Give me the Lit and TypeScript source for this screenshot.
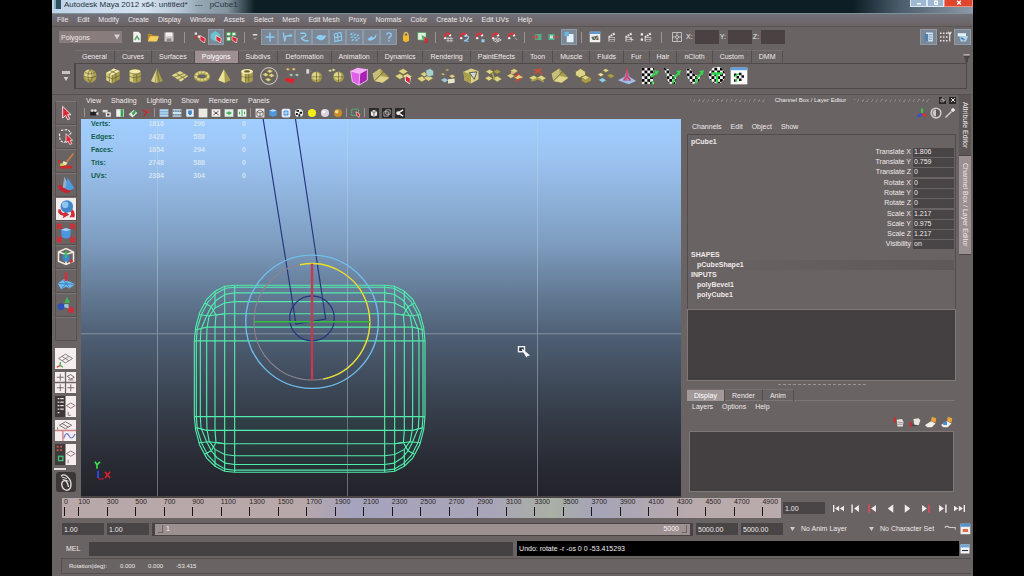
import { LitElement, html, svg, css } from "lit";

type Glyph = unknown;

const Y = "#ddd489";
const YD = "#a89e4e";
const YK = "#665f2c";

const plate = (x: number, y: number, s: number, c = Y) =>
  svg`<path d="M${x} ${y + s * 0.5}L${x + s} ${y}L${x + s * 2} ${y + s * 0.6}L${x + s} ${y + s * 1.2}Z" fill=${c} stroke=${YK} stroke-width=".6"/>`;

const checker = (id: string, outline: string) => {
  const cells = [];
  for (let r = 0; r < 6; r++) for (let c = 0; c < 6; c++) if ((r + c) % 2 === 0) cells.push(svg`<rect x=${2 + c * 3.4} y=${2 + r * 3.4} width="3.4" height="3.4" fill="#0a0a0a"/>`);
  return svg`<clipPath id=${id}><path d=${outline}/></clipPath><g clip-path="url(#${id})"><rect width="24" height="24" fill="#f4f4f4"/>${cells}</g>`;
};
const greenArrow = svg`<path d="M14 14L21 8M13 21L15 15" stroke="#35d64a" stroke-width="2.4" fill="none"/><path d="M17 6L23 5L21 11Z" fill="#35d64a"/>`;

/* Glyphs on a 24 unit grid, used by the shelf and the toolbox. */
const G: Record<string, Glyph> = {
  sphere: svg`<circle cx="12" cy="12" r="8" fill=${YD}/><circle cx="10.500" cy="10" r="5.500" fill=${Y}/><path d="M4 12Q12 16 20 12M12 4Q7 12 12 20M12 4Q17 12 12 20M6 8Q12 11 18 8" stroke=${YK} fill="none" stroke-width=".8"/>`,
  cube: svg`<path d="M4 8L13 3L20 6V16L11 21L4 17Z" fill=${YD}/><path d="M4 8L13 3L20 6L11 11Z" fill="#f2ebae"/><path d="M4 8L11 11V21L4 17Z" fill=${Y}/><path d="M7.500 9.500V19M4 12.500L11 15.500L20 11.500M15.500 9V18.500M8.500 5.500L15.500 9M16.500 4.500L7.500 9.500M11 11V21" stroke=${YK} fill="none" stroke-width=".8"/>`,
  cyl: svg`<path d="M5 7V18Q12 23 19 18V7Z" fill=${YD}/><path d="M6 8V18L11 20V8Z" fill=${Y}/><ellipse cx="12" cy="6.500" rx="7" ry="3" fill="#f2ebae" stroke=${YK} stroke-width=".8"/><path d="M5 12.500Q12 16 19 12.500M10 10V20M14 10V20" stroke=${YK} fill="none" stroke-width=".7"/>`,
  cone: svg`<path d="M12 3L19 18Q12 22 5 18Z" fill=${YD}/><path d="M12 3L12 20Q8 20 5 18Z" fill=${Y}/><path d="M12 4L10 20M12 4L15 20" stroke=${YK} stroke-width=".7"/>`,
  plane: svg`<path d="M2 11L12 6L22 12L13 19Z" fill=${Y}/><path d="M7.500 8.500L18 15.500M5 13.500L17 9M9 16.500L20 11" stroke=${YK} stroke-width=".9"/>`,
  torus: svg`<ellipse cx="12" cy="12.500" rx="7.500" ry="4.500" fill="none" stroke=${YD} stroke-width="4.500"/><ellipse cx="12" cy="12" rx="7.500" ry="4.500" fill="none" stroke=${Y} stroke-width="2.600" stroke-dasharray="3 1"/>`,
  pyramid: svg`<path d="M12 4L20 17L13 20L5 17Z" fill=${YD}/><path d="M12 4L13 20L5 17Z" fill="#ebe39a"/>`,
  pipe: svg`<path d="M5 7V18Q12 23 19 18V7Z" fill=${YD}/><path d="M6 8V18L10 20V8Z" fill=${Y}/><ellipse cx="12" cy="6.500" rx="7" ry="3" fill="#f2ebae"/><ellipse cx="12" cy="6.500" rx="3.500" ry="1.400" fill=${YK}/><path d="M5 12.500Q12 16 19 12.500M10 10V20M14 10V20" stroke=${YK} fill="none" stroke-width=".7"/>`,
  soccer: svg`<circle cx="12" cy="12" r="10" fill="none" stroke="#d8d0c4" stroke-width="1.200"/>${plate(9, 4, 4)}${plate(4, 8, 4)}${plate(11, 9, 4)}${plate(7, 14, 4)}`,
  combine: svg`${plate(4, 2, 3, "#e3c08c")}${plate(11, 2, 3, "#e3c08c")}${plate(8, 9, 3, "#a8d4dc")}${plate(15, 9, 3, "#a8d4dc")}<path d="M4 14L16 16L12 21L4 18Z" fill="#e0202c"/>`,
  sphereA: svg`<circle cx="15" cy="13" r="6.500" fill=${YD}/><circle cx="14" cy="12" r="4.500" fill=${Y}/><path d="M9 13H21M15 7V19" stroke=${YK} stroke-width=".8"/><path d="M3 4H6V9H3ZM7 6H9" fill="#ddd" stroke="#bbb" stroke-width=".5"/>`,
  sphereB: svg`<circle cx="15" cy="13" r="6.500" fill=${YD}/><circle cx="14" cy="12" r="4.500" fill=${Y}/><path d="M9 13H21M15 7V19" stroke=${YK} stroke-width=".8"/>${plate(2, 4, 3, "#d8d4b0")}${plate(6, 3, 3, "#d8d4b0")}`,
  magenta: svg`<path d="M2 6L10 2L22 4V17L12 23L4 19Z" fill="#a822b4"/><path d="M2 6L10 2L22 4L13 9Z" fill="#f3b0f6"/><path d="M2 6L13 9L12 23L4 19Z" fill="#df5fe8"/><path d="M2 6L13 9L22 4M13 9L12 23M2 6L4 19L12 23L22 17V4" stroke="#f7d3fa" fill="none"/>`,
  wedge: svg`<path d="M2 9L11 3L22 14L14 20L4 18Z" fill=${YD}/><path d="M2 9L11 3L12 12L4 18Z" fill="#c6be7a"/><path d="M4 18L12 12L22 14L14 20Z" fill=${Y}/><path d="M4 18L16 6" stroke=${YK}/>`,
  extrude: svg`${plate(5, 3, 6)}${plate(1, 9, 6)}${plate(10, 9, 6)}<path d="M13 11L20 14L19 22L13 18Z" fill="#fff"/><path d="M14 12L19 15V21L14 17Z" fill="#d8202c"/>`,
  bridge: svg`${plate(1, 12, 6)}${plate(9, 11, 6)}${plate(5, 7, 5)}<path d="M12 5L17 3L21 6V11L16 13L12 11Z" fill="#a9d0c6" stroke="#5e7a86" stroke-width=".8"/>`,
  append: svg`${plate(8, 3, 3, "#a8a27c")}${plate(3, 8, 3, "#bcb68a")}${plate(3, 14, 5, "#9cc9ea")}${plate(13, 10, 4)}<path d="M12 16L20 15V20L12 21Z" fill="#e9e6c8"/>`,
  cubeFace: svg`<path d="M3 7L12 3L21 6V16L12 21L4 17Z" fill=${Y}/><path d="M3 7L12 10V21L4 17Z" fill=${YD}/><path d="M10 8L19 7L16 16Z" fill="#d4d8d2" stroke="#333" stroke-width=".9"/>`,
  planes: svg`${plate(3, 4, 5)}${plate(12, 4, 5, YD)}${plate(2, 12, 5)}${plate(11, 12, 6)}<path d="M11 8L14 16" stroke=${YD} stroke-width="2"/>`,
  planesRed: svg`${plate(6, 3, 5)}${plate(2, 9, 5)}${plate(10, 10, 6)}<path d="M12 13L17 9M13 18L19 15" stroke="#d84030" stroke-width="2"/><circle cx="9" cy="8" r="2" fill="#e3b070"/>`,
  planesTop: svg`${plate(1, 11, 6)}${plate(10, 11, 6)}<path d="M7 5H16M8 9L16 3M10 4L17 10" stroke="#c2523c" stroke-width="2"/><path d="M4 18L12 15L19 19" stroke=${YD} stroke-width="2" fill="none"/>`,
  boxes: svg`<path d="M3 7L9 3L15 7V12L8 14L3 11Z" fill=${Y} stroke=${YK} stroke-width=".7"/><path d="M10 13L16 11L22 14V18L15 21L10 18Z" fill=${YD} stroke=${YK} stroke-width=".7"/>${plate(10, 11, 5)}`,
  swap: svg`${plate(9, 3, 4)}${plate(3, 8, 4, "#e9e2a4")}${plate(14, 9, 5, YD)}${plate(4, 14, 5, "#8ccdf2")}`,
  sculpt: svg`<path d="M1 17L9 13H15L23 18L14 22Z" fill="#9ebfe8"/><path d="M12 4L17 18H7Z" fill="#a97db8"/><path d="M12 3V14M8 17L12 13L16 17" stroke="#e23a4c" stroke-width="1.500" fill="none"/>`,
  uvA: svg`${checker("ka", "M2 2H17L15 12L17 22H2Z")}<path d="M13 13L20 8M15 18V22" stroke="#35d64a" stroke-width="2.400"/><path d="M17 5L23 6L20 11Z" fill="#35d64a"/>`,
  uvB: svg`${checker("kb", "M2 2L8 4L10 10L17 12L16 22L8 21Z")}${greenArrow}`,
  uvC: svg`${checker("kc", "M2 3L7 3Q8 10 18 13L17 19L9 22Q1 16 2 3Z")}${greenArrow}`,
  uvD: svg`${checker("kd", "M12 1A10 10 0 1 1 11.900 1Z")}<path d="M6 9H18M12 9V20" stroke="#35d64a" stroke-width="2.800"/>`,
  uvE: svg`<rect x="2" y="2" width="20" height="20" fill="#fbfbfb"/><rect x="2" y="2" width="20" height="3" fill="#5aa0e0"/><path d="M6 9H9V12H6ZM12 8H15V11H12ZM9 12H12V15H9ZM15 11H18V14H15ZM12 15H15V18H12ZM6 16H8V19H6Z" fill="#111"/><path d="M6 13L12 9M9 19V15" stroke="#35d64a" stroke-width="1.600"/>`,
  arrow: svg`<path d="M8 4V18L11.500 15L14 20L16.500 19L14 14H18Z" fill="#d92a36" stroke="#fff" stroke-width="1"/>`,
  lasso: svg`<path d="M6 4L14 3L18 7L15 11M4 8L5 16L9 19L12 17" stroke="#e8e4e4" fill="none" stroke-width="1.400" stroke-dasharray="3 1.500"/><path d="M12 8V19L14.500 17L16.500 21L19 20L17 16H20Z" fill="#d92a36" stroke="#fff" stroke-width=".8"/>`,
  paint: svg`<path d="M13 13L21 3" stroke="#c97f4a" stroke-width="2"/><path d="M9 12L14 14L11 18L7 17Z" fill="#eee3b2"/><path d="M2 10L6 12L3 15M3 20L9 17L20 18L19 21H5Z" fill="#cc2b2b"/><path d="M5 15H9V18H5Z" fill="#d9c84e"/>`,
  move: svg`<path d="M10 2L16 14Q13 18 8 15Z" fill="#9fc3e4" opacity=".8"/><path d="M14 3L22 16Q16 20 11 17Z" fill="#4f9be0"/><path d="M2 13L7 12L8 15L19 20L12 22L4 18Z" fill="#c42733"/>`,
  rotate: svg`<rect width="24" height="24" fill="#f3ecec"/><path d="M3 12Q1 19 9 20L8 23L16 19L10 14V17Q6 17 6 13ZM18 11Q24 15 22 22H16Q20 17 17 15Z" fill="#d02d38"/><circle cx="13" cy="9" r="7.500" fill="#3f86cc"/><circle cx="11" cy="7" r="4" fill="#8fc4ee"/>`,
  scale: svg`<path d="M1 1H8L6 4L9 8L7 9L4 6L1 8ZM23 1H16L18 4L15 8L17 9L20 6L23 8ZM1 23H8L6 20L9 16L7 15L4 18L1 16ZM23 23H16L18 20L15 16L17 15L20 18L23 16Z" fill="#d02d38"/><path d="M6 8L12 6L18 8L17 17L12 19L7 17Z" fill="#4a96e0"/><path d="M6 8L12 6L18 8L12 10Z" fill="#a5d0f4"/>`,
  univ: svg`<path d="M3 6L12 2L21 6V17L12 21L3 17ZM3 6L12 9L21 6M12 9V21" fill="none" stroke="#f1eee0" stroke-width="1.800"/><circle cx="12" cy="13" r="4.500" fill="#3a86cf"/><path d="M12 5V13" stroke="#38c24a" stroke-width="2.500"/><path d="M17 14L21 17L17 20Z" fill="#d92a36"/>`,
  soft: svg`<path d="M2 15L9 10L15 12L23 16L16 21L12 19L6 22Z" fill="#6fb9ee"/><path d="M3 15L22 16M9 11L16 20M15 12L7 21" stroke="#2d6da8" stroke-width=".8"/><path d="M12 2V12" stroke="#d8303a" stroke-width="3"/>`,
  manip: svg`<circle cx="6" cy="14" r="4" fill="#2f50b8"/><path d="M11 13L18 18" stroke="#ddd" /><path d="M10 10L13 2L17 9Z" fill="#3cb84a"/><circle cx="18" cy="18" r="3.500" fill="#d32c38"/><rect x="10" y="11" width="5" height="4" fill="#9bc8e8"/>`,
  none: svg``,
  persp: svg`<rect width="24" height="24" fill="#f6eeee"/><path d="M4 12L12 7L20 12L12 17ZM8 9.500L16 14.500M8 14.500L16 9.500" stroke="#7c7474" fill="none"/><path d="M6 16V20L9 22" stroke="#34b24a" fill="none" stroke-width="1.500"/><path d="M6 20L2 22" stroke="#d33" stroke-width="1.500"/>`,
  four: svg`<rect width="24" height="24" fill="#f6eeee"/><path d="M12 0V24M0 12H24" stroke="#6b6464" stroke-width="1.500"/><path d="M2 6H10M6 2V10M2 18H10M6 14V22M14 18H22M18 14V22M14 5L18 3L22 6L18 8ZM15 9H21" stroke="#6b5c5c" fill="none"/>`,
  outl: svg`<rect width="24" height="24" fill="#f6eeee"/><rect width="12" height="24" fill="#3d3939"/><path d="M3 3H5M3 7H5M3 11H5M3 15H5M3 19H5M6 3H10M6 7H10M6 11H10M6 15H10" stroke="#e8e0e0" stroke-width="1.200"/><path d="M13 11L18 8L23 11L18 14ZM15 18V22H18" stroke="#8a6c6c" fill="none"/>`,
  graph: svg`<rect width="24" height="24" fill="#f6eeee"/><path d="M0 12H24M9 12V24" stroke="#d08080" stroke-width="1.500"/><path d="M5 6L12 2L19 6L12 10ZM8 4L15 8" stroke="#6b6464" fill="none"/><path d="M10 21Q13 12 16 18T23 16" stroke="#6678c8" fill="none" stroke-width="1.300"/><path d="M3 8V11" stroke="#3a3"/>`,
  hyper: svg`<rect width="24" height="24" fill="#f6eeee"/><rect width="12" height="24" fill="#3d3939"/><path d="M2 3H4M6 3H8M2 7H4M6 7H8" stroke="#e25a4a" stroke-width="2"/><rect x="4" y="14" width="5" height="5" fill="none" stroke="#49c07a" stroke-width="1.500"/><path d="M13 11L18 8L23 11L18 14ZM15 18V22" stroke="#8a6c6c" fill="none"/>`,
  last: svg`<rect width="24" height="24" rx="4" fill="#3b3737"/><path d="M6 5Q9 2 13 5Q18 9 18 15Q18 21 13 22Q8 21 7 16Q6 11 11 10Q14 12 15 18" stroke="#e6dfdf" fill="none" stroke-width="1.600"/><path d="M7 6L13 8M8 9L15 11" stroke="#e6dfdf" stroke-width="1.200"/>`,
};

const magnet = svg`<path d="M3 10A5 5 0 1 1 12 5L9 7A2.200 2.200 0 1 0 5.500 8.500Z" fill="#e0303a"/><path d="M2.500 8.500L5.500 8L6 10.500L3 11ZM9 5.500L11.500 4L12.500 6.500L10 7.500Z" fill="#f2eeee"/>`;
const clap = svg`<path d="M3 8H12V14H3Z" fill="#b9b3b3"/><path d="M3 7L11 2L12 5L4 9Z" fill="#e9e4e4"/><path d="M5 10H11M5 12.500H11M5 5.500L7 8M8 4L10 7" stroke="#444"/>`;
const blue = "#8cccf2";

/* Glyphs on a 16 unit grid, used by the status line and small bars. */
const S: Record<string, Glyph> = {
  newf: svg`<path d="M3 1H10L13 4V15H3Z" fill="#f4f2ee"/><path d="M5 12L8 7L11 12" stroke="#5fae72" stroke-width="2" fill="none"/>`,
  open: svg`<path d="M1 4H6L8 6H14V13H1Z" fill="#b9892a"/><path d="M4 7H16L13 14H1Z" fill="#f2cf5e"/>`,
  save: svg`<path d="M2 2H14V14H2Z" fill="#cdc6c6"/><path d="M4 2H12V7H4Z" fill="#f3efef"/><path d="M5 10H11V14H5Z" fill="#8b8484"/>`,
  selH: svg`<path d="M1 2H4V5H1ZM5 6H8V9H5Z" fill="#e8e4e4"/><path d="M1 7H4V10H1Z" fill="#c33"/><path d="M8 6L15 10L14 16L8 12Z" fill="#d92a36" stroke="#fff" stroke-width=".8"/>`,
  selO: svg`<path d="M1 4L7 0L13 4V11L7 14L1 10Z" fill="#6ac4cf"/><path d="M8 6L15 10L14 16L8 12Z" fill="#d92a36" stroke="#fff" stroke-width=".8"/>`,
  selC: svg`<path d="M1 2H6V6H1ZM8 2H13V6H8ZM1 8H6V13H1Z" fill="#eef4ea" stroke="#3fae57"/><path d="M8 7L15 10L14 16L8 12Z" fill="#d92a36" stroke="#fff" stroke-width=".8"/>`,
  tiny: svg`<path d="M5 4H11V6H5Z" fill="#ddd"/><path d="M5 9H11L8 12Z" fill="#9c9494"/>`,
  plus: svg`<path d="M8 2V14M2 8H14" stroke=${blue} stroke-width="2"/>`,
  joint: svg`<path d="M3 2L5 14L6 7L13 6" stroke=${blue} stroke-width="1.800" fill="none"/><circle cx="13" cy="6" r="1.800" fill=${blue}/>`,
  curve: svg`<path d="M3 3H9Q13 6 7 8T10 13H14" stroke=${blue} stroke-width="1.800" fill="none"/>`,
  surf: svg`<path d="M1 9Q5 3 10 6L15 6Q12 14 6 12Z" fill=${blue}/>`,
  deform: svg`<path d="M3 4L12 2L13 12L4 14ZM7 3L8 13M3 9L13 7" stroke=${blue} stroke-width="1.400" fill="none"/>`,
  dyn: svg`<path d="M2 5L6 2M3 9L10 3M4 13L13 5M9 13L14 9" stroke=${blue} stroke-width="2" stroke-dasharray="3 1.500"/>`,
  rend: svg`<path d="M2 11L7 7L10 9L14 4L13 9L9 12L4 13Z" fill=${blue}/>`,
  misc: svg`<path d="M5 5Q5 2.500 8 2.500T11 5.500Q11 7.500 8 8.500V10.500M8 12V14" stroke=${blue} stroke-width="1.900" fill="none"/>`,
  lock: svg`<path d="M5.500 7V4Q8 0 10.500 4V7" stroke="#e4c25a" stroke-width="1.800" fill="none"/><path d="M4 6H12V13L8 15L4 13Z" fill="#efb92c"/>`,
  hilite: svg`<rect x="1" y="2" width="11" height="10" fill="#e6f0e4" stroke="#4aa35c"/><path d="M6 5L13 9L12 14L7 11Z" fill="#4fb36a"/><path d="M10 8L14 10V16H10Z" fill="#d92a36"/>`,
  magG: svg`${magnet}<path d="M6 10H15M6 13H15M8 8V15M12 8V15" stroke="#d8d2d2"/>`,
  magC: svg`${magnet}<path d="M8 7Q15 6 14 9T8 13L14 14" stroke="#8fc6ea" fill="none" stroke-width="1.600"/>`,
  magP: svg`${magnet}<rect x="10" y="11" width="4" height="4" fill="#8fd0f0"/>`,
  magV: svg`${magnet}<path d="M4 12L10 9L15 12L9 15ZM7 10.500L12 13.500M7 14L13 10" stroke="#e4dede" fill="none"/>`,
  magL: svg`${magnet}<path d="M12 9L15 12" stroke="#ccc"/>`,
  inp: svg`<path d="M5 4H14V12H5Z" fill="#4fb08c"/><path d="M1 8H9M6 5L9 8L6 11" stroke="#d8404a" fill="none" stroke-width="1.500"/>`,
  outp: svg`<path d="M2 4H10V12H2Z" fill="#4fb08c"/><path d="M8 8H15" stroke="#d8404a" stroke-width="1.500"/><path d="M4 6H8V10H4Z" fill="#bfe6d8"/>`,
  hist: svg`<path d="M5 4H14V15H5Z" fill="#e6f2fa"/><path d="M2 1H8V7H2Z" fill="#6cb6e4"/>`,
  rview: svg`<rect x="1" y="1" width="14" height="14" fill="#f0f0f0"/><rect x="1" y="1" width="14" height="3" fill="#5d9ad0"/><path d="M3 8L12 6L13 12H5Z" fill="#5a6a78"/><path d="M6 7L9 12L12 7" stroke="#e3c05a" fill="none"/>`,
  clap, clap2: svg`${clap}<path d="M9 10L14 12" stroke="#fff"/>`,
  rset: svg`<path d="M1 3H4V6H1ZM1 10H4V13H1Z" fill="#eee"/><g transform="translate(3 0)">${clap}</g>`,
  xyz: svg`<path d="M2 2H14V14H2ZM8 2V14M2 8H14" stroke="#ddd6d6" fill="none"/><circle cx="8" cy="8" r="2" fill="#6b6464" stroke="#ddd6d6"/>`,
  attr: svg`<rect x="4" y="2" width="9" height="12" fill="#d6e8f6"/><rect x="2" y="4" width="5" height="10" fill="#5580a8"/><path d="M8 5H12M8 8H12M8 11H12" stroke="#5580a8"/>`,
  tool: svg`<path d="M0 3H2M4 3H6M8 3H10M0 8H2M4 8H6M8 8H10M0 13H2M4 13H6M8 13H10" stroke="#eee6e6" stroke-width="1.800"/><path d="M13 2V14M11 1L13 5L15 1" stroke="#eee6e6" fill="none" stroke-width="1.500"/>`,
  chan: svg`<path d="M1 3H12V7H1Z" fill="#e9f3fa"/><path d="M3 6L15 7L12 14H5Z" fill="#b4d2e6"/><path d="M5 9L10 12" stroke="#4b86b8" stroke-width="2"/>`,
  cam: svg`<path d="M2 6H11V12H2Z" fill="#222"/><circle cx="5" cy="4" r="2.200" fill="#ddd"/><circle cx="10" cy="4" r="2.200" fill="#ddd"/><path d="M11 9L15 6V12Z" fill="#ddd"/>`,
  cam2: svg`<path d="M1 3H9V7H1Z" fill="#ddd"/><path d="M6 7H14V14H6Z" fill="#f3efef"/><path d="M8 9H12V12H8Z" fill="#444"/>`,
  book: svg`<rect x="2" y="2" width="12" height="12" fill="#f2f6f2"/><rect x="9" y="2" width="4" height="12" fill="#2fa84c"/>`,
  imgp: svg`<path d="M1 10L9 3L15 8L7 15Z" fill="#dfe8dc"/><path d="M6 8L12 2V8L8 12Z" fill="#3fa35a"/>`,
  zoomp: svg`<circle cx="12" cy="5" r="2.500" fill="none" stroke="#d33" stroke-width="1.500"/><path d="M2 3L9 7L4 14" stroke="#c22" stroke-width="1.800" fill="none"/>`,
  gridi: svg`<rect x="1" y="2" width="14" height="12" fill="#b8d8f2"/><path d="M1 6H15M1 10H15" stroke="#4b86b8"/>`,
  film: svg`<rect x="1" y="2" width="14" height="12" fill="#cfe2f0"/><path d="M1 5H15M1 11H15" stroke="#35546e" stroke-width="2" stroke-dasharray="2 1"/>`,
  resg: svg`<rect x="2" y="2" width="12" height="12" fill="#dff0fc"/><path d="M5 4H11V9L8 12L5 9Z" fill="#3f86c4"/>`,
  gate: svg`<rect x="1" y="1" width="14" height="14" fill="#ebe9e4"/>`,
  fldc: svg`<rect x="1" y="2" width="14" height="12" fill="#f3efec"/><path d="M4 5L12 11M12 5L4 11" stroke="#333" stroke-width="1.300"/>`,
  safe: svg`<rect x="1" y="2" width="14" height="12" fill="#dff3e4"/><path d="M3 8L8 5L13 8L8 11Z" fill="#4ab06a"/>`,
  safe2: svg`<rect x="1" y="2" width="14" height="12" fill="#e6f3e8"/><path d="M8 3V13M4 6V10M12 6V10" stroke="#3c9c58" stroke-width="1.500"/>`,
  wire: svg`<rect x="1" y="1" width="14" height="14" fill="#eee8e6"/><path d="M3 6L8 3L13 6V12L8 14L3 12ZM3 6L8 8L13 6M8 8V14" stroke="#333" fill="none"/>`,
  shade: svg`<path d="M2 4L8 2L14 4V12L8 14L2 12Z" fill="#4f98e0"/><path d="M2 4L8 2L14 4L8 6Z" fill="#b8dcf8"/>`,
  shadew: svg`<rect x="1" y="1" width="14" height="14" rx="3" fill="#dcecfa"/><path d="M4 5L8 3L12 5V11L8 13L4 11Z" fill="#4f98e0"/><path d="M8 3V13M4 8H12" stroke="#fff"/>`,
  tex: svg`<circle cx="8" cy="8" r="6.500" fill="#f3f3f3"/><path d="M4 3H8V6H4ZM9 6H13V9H9ZM3 8H6V11H3ZM7 10H10V14H7Z" fill="#111"/>`,
  lightY: svg`<circle cx="8" cy="8" r="6.500" fill="#f2ee18"/>`,
  lightW: svg`<circle cx="8" cy="8" r="6.500" fill="#dcd2e0"/><circle cx="6" cy="6" r="2.500" fill="#fff"/>`,
  lightO: svg`<circle cx="8" cy="8" r="6.500" fill="#c98d28"/><circle cx="6" cy="6" r="2.800" fill="#f8dc8c"/>`,
  iso: svg`<rect x="1" y="2" width="11" height="10" fill="none" stroke="#4fc06a" stroke-dasharray="2 1" stroke-width="1.800"/><path d="M8 6L14 10L13 15L9 12Z" fill="#d92a36" stroke="#fff" stroke-width=".8"/>`,
  xray: svg`<rect width="16" height="16" fill="#2c2929"/><path d="M3 5L8 3L13 5V12L8 14L3 12Z" fill="#e9e5e5"/><path d="M3 5L8 7L13 5M8 7V14" stroke="#333" fill="none"/>`,
  xrayb: svg`<rect width="16" height="16" fill="#2c2929"/><path d="M3 6H10V13H3ZM6 3H13V10H6Z" stroke="#e9e5e5" fill="none"/>`,
  share: svg`<rect width="16" height="16" fill="#2c2929"/><path d="M13 3L5 8L13 13" stroke="#f2eeee" stroke-width="2.500" fill="none"/><circle cx="5" cy="8" r="3" fill="#f2eeee"/>`,
  axes: svg`<path d="M8 9V2" stroke="#3fc050" stroke-width="3"/><path d="M8 9L2 13" stroke="#2f4fd8" stroke-width="3"/><path d="M8 9L14 12" stroke="#d83030" stroke-width="3"/>`,
  half: svg`<circle cx="8" cy="8" r="7.500" fill="#d0c8c8"/><path d="M8 3A5 5 0 0 1 8 13Z" fill="#5c5555"/><circle cx="8" cy="8" r="5" fill="none" stroke="#6b6464"/>`,
  pick: svg`<path d="M2 14L10 6" stroke="#d6cfcf" stroke-width="2"/><path d="M9 4L12 1L15 4L12 7Z" fill="#f0eaea"/>`,
  layU: svg`<path d="M1 2H4V9H1Z" fill="#c82f34"/><path d="M5 5L12 4L14 8L13 14H6Z" fill="#e9e4dc"/><path d="M6 8L13 9M6 11H13" stroke="#827a7a"/>`,
  layD: svg`<path d="M1 8H4V15H1Z" fill="#c82f34"/><path d="M6 4L13 3L15 6L13 12H7Z" fill="#e9e4dc"/><path d="M4 12L10 13" stroke="#444" stroke-width="2"/>`,
  layN: svg`<path d="M0 12L8 7L14 10L9 15H3Z" fill="#f3f0ea"/><path d="M9 1L15 3L14 9L8 7Z" fill="#e8a33a"/>`,
  layS: svg`<path d="M0 12L8 7L14 10L9 15H3Z" fill="#f3f0ea"/><path d="M3 8H8V12H3Z" fill="#3f8fe0"/><path d="M9 1L15 3L14 9L8 7Z" fill="#e8a33a"/>`,
  key: svg`<path d="M1 6Q4 3 7 6H15V9" stroke="#cfc7c7" fill="none" stroke-width="1.500"/>`,
  pref: svg`<rect x="2" y="1" width="13" height="14" fill="#f3eeee"/><rect x="2" y="1" width="13" height="4" fill="#4f93d0"/><path d="M5 8H12V12H5Z" fill="#df6a4a"/>`,
  script: svg`<rect x="2" y="2" width="12" height="12" fill="#f0f4f8"/><rect x="2" y="2" width="12" height="4" fill="#6ea6d4"/><path d="M4 10H12" stroke="#333" stroke-width="1.500"/>`,
  trash: svg`<path d="M5 4H14V7L11 9V15H7V9L5 7Z" fill="#4a4444"/><path d="M4 3H14" stroke="#c9c2c2" stroke-width="2"/>`,
  wmin: svg`<path d="M3 8H13V12H3Z" fill="#fff"/>`,
  wmax: svg`<path d="M3 1H13V13H3ZM6 5V9H10V5Z" fill="#fff" fill-rule="evenodd"/>`,
  wx: svg`<path d="M3 2L13 12M13 2L3 12" stroke="#fff" stroke-width="3.500"/>`,
  pfl: svg`<path d="M6 2H14V9H6ZM2 6H10V13H2Z" fill="#2a2627" stroke="#e8e0e0" stroke-width="1.400"/>`,
  px: svg`<path d="M3 3L13 13M13 3L3 13" stroke="#f2ecec" stroke-width="2.600"/>`,
  p0: svg`<path d="M1 3V13" stroke="#f2ecec" stroke-width="2"/><path d="M9 4V12L3 8ZM16 4V12L10 8Z" fill="#f2ecec"/>`,
  p1: svg`<path d="M3 2V14" stroke="#f2ecec" stroke-width="2"/><path d="M13 3V13L6 8Z" fill="#f2ecec"/>`,
  p2: svg`<path d="M3 2V14" stroke="#f0465a" stroke-width="2"/><path d="M13 3V13L6 8Z" fill="#f2ecec"/>`,
  p3: svg`<path d="M12 2V14L4 8Z" fill="#f2ecec"/>`,
  p4: svg`<path d="M4 2V14L12 8Z" fill="#f2ecec"/>`,
  p5: svg`<path d="M13 2V14" stroke="#f0465a" stroke-width="2"/><path d="M3 3V13L10 8Z" fill="#f2ecec"/>`,
  p6: svg`<path d="M13 2V14" stroke="#f2ecec" stroke-width="2"/><path d="M3 3V13L10 8Z" fill="#f2ecec"/>`,
  p7: svg`<path d="M15 3V13" stroke="#f2ecec" stroke-width="2"/><path d="M0 4V12L6 8ZM7 4V12L13 8Z" fill="#f2ecec"/>`,
};

const big = (n: string, cls = "i20") => html`<svg class=${cls} viewBox="0 0 24 24" aria-hidden="true">${G[n]}</svg>`;
const small = (n: string, cls = "i12") => html`<svg class=${cls} viewBox="0 0 16 16" aria-hidden="true">${S[n]}</svg>`;
const iconButton = (n: string, cls: string) => html`<button class=${cls} aria-label=${n}>${small(n)}</button>`;

const MENUS = ["File", "Edit", "Modify", "Create", "Display", "Window", "Assets", "Select", "Mesh", "Edit Mesh", "Proxy", "Normals", "Color", "Create UVs", "Edit UVs", "Help"];
const SHELVES = ["General", "Curves", "Surfaces", "Polygons", "Subdivs", "Deformation", "Animation", "Dynamics", "Rendering", "PaintEffects", "Toon", "Muscle", "Fluids", "Fur", "Hair", "nCloth", "Custom", "DMM"];
const SHELF_ITEMS = ["sphere", "cube", "cyl", "cone", "plane", "torus", "pyramid", "pipe", "soccer", "combine", "sphereA", "sphereB", "magenta", "wedge", "extrude", "bridge", "append", "cubeFace", "planes", "planesRed", "planesTop", "wedge", "boxes", "swap", "sculpt", "uvA", "uvB", "uvC", "uvD", "uvE"];
const CHANNELS = [
  [["Translate X", "1.806"], ["Translate Y", "0.759"], ["Translate Z", "0"]],
  [["Rotate X", "0"], ["Rotate Y", "0"], ["Rotate Z", "0"]],
  [["Scale X", "1.217"], ["Scale Y", "0.975"], ["Scale Z", "1.217"], ["Visibility", "on"]],
];
const POLYCOUNT = [["Verts:", "1816", "296", "0"], ["Edges:", "2428", "588", "0"], ["Faces:", "1854", "294", "0"], ["Tris:", "2748", "588", "0"], ["UVs:", "2384", "304", "0"]];

class AppRoot extends LitElement {
  static properties = { shelf: { state: true }, tool: { state: true }, layerTab: { state: true } };
  declare shelf: string;
  declare tool: string;
  declare layerTab: string;

  constructor() {
    super();
    this.shelf = "Polygons";
    this.tool = "rotate";
    this.layerTab = "Display";
  }

  static styles = css`
    :host { display: block; height: 100vh; background: #000; color: #efe9e9; font: 7px/10px "Liberation Sans", Arial, sans-serif; }
    * { box-sizing: border-box; }
    button, input, select { font: inherit; color: inherit; border: 0; margin: 0; padding: 0; background: none; border-radius: 0; min-width: 0; outline: none; }
    button { display: flex; align-items: center; justify-content: center; flex: none; white-space: nowrap; }
    svg { display: block; flex: none; }
    .i20 { width: 20px; height: 20px; }
    .i12 { width: 12px; height: 12px; }
    .i10 { width: 10px; height: 10px; }
    .i6 { width: 6px; height: 6px; }
    .app { height: 100%; margin: 0 51px 0 52px; display: flex; flex-direction: column; background: #6a6364; overflow: hidden; }

    .title { height: 14px; flex: none; display: flex; align-items: flex-start; gap: 7px; padding-left: 2px; overflow: hidden; color: #27333c; font-size: 8px; border-bottom: 1px solid #7f9298;
      background: linear-gradient(90deg, #bfd4ea 0, #d4e2f0 10%, #b3c5d4 14%, #96a7b4 16%, #8495a1 19%, #0d1e25 22%, #0d1e25 87%, #4a5b6b 92%, #8c9aa8 100%); }
    .title .logo { width: 7px; height: 9px; margin-right: -4px; background: #2d5360; border-left: 2px solid #86a8b8; }
    .wbtns { margin-left: auto; display: flex; height: 7px; }
    .wbtns button { width: 17px; background: #9db8d2; border: 1px solid #dce8f4; border-top: 0; }
    .wbtns .x { width: 29px; background: #e0452e; border-color: #f09080; }

    .menu { display: flex; gap: 9px; flex: none; height: 12px; align-items: center; padding-left: 5px; background: linear-gradient(#72717b, #6a6364); }
    .menu button { height: 10px; }

    .status { display: flex; flex: none; align-items: center; height: 21px; padding: 0 2px 0 7px; margin-bottom: 3px; border-top: 1px solid #5b5455; }
    .mode { position: relative; display: flex; width: 63px; margin-right: 7px; }
    .mode select { appearance: none; width: 100%; height: 12px; padding: 0 10px 0 2px; background: #887c7d; color: #f0e8e8; line-height: 11px; }
    .mode svg { position: absolute; right: 2px; top: 3px; width: 6px; height: 6px; pointer-events: none; }
    .grp { display: flex; flex: none; }
    .sb { width: 16px; height: 16px; }
    .sb.wide { width: 17px; }
    .sb.slim { width: 12px; }
    .sb.on { background: #7d8896; border: 1px solid #8e9aa8; }
    .sep { width: 1px; height: 11px; background: #9c9494; margin: 0 7px; flex: none; }
    .sep.s { margin: 0 4px; }
    .coord { display: flex; align-items: center; gap: 2px; margin-left: 1px; }
    .coord input { width: 24px; height: 14px; background: #4a4142; }
    .end { margin-left: auto; }

    .tabs { display: flex; flex: none; height: 13px; padding-left: 23px; align-items: flex-end; }
    .tab { height: 13px; padding: 0 7px; border-right: 1px solid #554e4f; border-top: 1px solid #777071; }
    .tab.on { background: #a08f92; color: #fff; }
    .tabs .bin { margin-left: auto; margin-right: 2px; }
    .shelfrow { display: flex; flex: none; height: 26px; margin: 0 6px 5px 6px; }
    .shelfhandle { width: 17px; flex: none; display: flex; flex-direction: column; align-items: center; justify-content: center; gap: 3px; border-right: 1px solid #4d4647; }
    .shelfhandle i { width: 8px; height: 3px; background: #c9c2c2; }
    .shelfhandle svg { width: 6px; height: 4px; }
    .shelf { flex: 1; display: grid; grid-template-columns: repeat(39, minmax(0, 1fr)); border: 1px solid #4f4849; padding: 0 14px 0 3px; }
    .shelf button { width: 100%; height: 24px; }

    .main { flex: 1; min-height: 0; display: grid; grid-template-columns: 29px minmax(0, 1fr) 276px 16px; border-top: 1px solid #575051; }
    .tools { display: flex; flex-direction: column; align-items: center; padding: 6px 4px 0 2px; overflow: hidden; }
    .tools .t { width: 22px; height: 24px; border: 1px solid #575051; border-top-color: #7c7576; }
    .tools .t.on { background: #f3ecec; }
    .lay { display: flex; flex-direction: column; gap: 3px; margin-top: 7px; }
    .lay svg { width: 21px; height: 21px; }
    .bar { height: 2px; width: 12px; background: #e6dfdf; align-self: flex-start; margin: 3px 0 2px; }

    .view { display: flex; flex-direction: column; min-width: 0; border-bottom: 2px solid #4b4546; }
    .vmenu { display: flex; gap: 10px; height: 11px; padding-left: 5px; align-items: center; flex: none; }
    .vbar { display: flex; align-items: center; height: 13px; padding-left: 1px; flex: none; }
    .vbar button { width: 13px; height: 12px; }
    .vbar .sep { height: 9px; margin: 0 2px; }
    .canvas { position: relative; flex: 1; min-height: 0; overflow: hidden; background: linear-gradient(#a0ceff 0, #9cc4f2 10%, #7f9fc2 32%, #67809c 44%, #4c5c70 59%, #37404d 76%, #282a33 92%, #23232b 100%); }
    .scene { position: absolute; inset: 0; width: 100%; height: 100%; }
    .hud { position: absolute; left: 10px; top: -2px; border-collapse: collapse; font-weight: 700; color: #d4e4f4; }
    .hud td, .hud th { padding: 0; height: 13px; line-height: 13px; text-align: right; width: 41px; }
    .hud th { text-align: left; width: 32px; color: #125c4c; }

    .side { display: flex; flex-direction: column; padding: 0 1px 6px 6px; min-width: 0; }
    .dock { display: flex; align-items: center; gap: 8px; font-size: 6px; height: 10px; flex: none; }
    .dots { flex: 1; height: 3px; background: repeating-linear-gradient(120deg, #8a8283 0 1px, transparent 1px 4px); margin-left: 3px; }
    .dots.r { margin-left: 0; }
    .wb { display: flex; gap: 3px; }
    .wb button { width: 7px; height: 7px; background: #2a2627; }
    .tri { display: flex; justify-content: flex-end; gap: 2px; height: 16px; align-items: center; flex: none; }
    .smenu { display: flex; gap: 9px; height: 12px; align-items: center; padding-left: 5px; flex: none; }
    .chan { flex: none; border: 1px solid #524b4c; border-bottom: 0; padding: 2px 1px 9px 3px; margin-top: 1px; }
    .chan b { display: block; height: 10px; }
    .chan b.in { padding-left: 6px; }
    .chan b.hl { background: linear-gradient(90deg, #6a6364, #5e5859); }
    .cg { margin-bottom: 1px; }
    .row { display: flex; justify-content: flex-end; align-items: center; height: 10px; gap: 2px; }
    .row input { width: 41px; height: 9px; background: #494445; padding-left: 1px; }
    .well { background: #444041; border: 1px solid #7f7778; min-height: 20px; }
    .w1 { flex: 72 1 0; }
    .grip { height: 1px; width: 88px; margin: 3px auto 4px; border-top: 1px dashed #9b9394; flex: none; }
    .ltabs { display: flex; height: 12px; flex: none; border-bottom: 1px solid #7d7576; margin-right: 1px; }
    .ltabs .tab { height: 12px; }
    .ltabs .on { background: #a3999a; }
    .licons { display: flex; justify-content: flex-end; gap: 4px; height: 18px; align-items: center; padding-right: 3px; flex: none; }
    .w2 { flex: 60 1 0; margin: 0 2px; }
    .vtabs { display: flex; flex-direction: column; width: 12px; margin-left: 2px; }
    .vtabs button { writing-mode: vertical-rl; width: 12px; padding: 7px 0; background: #5d5657; border-bottom: 1px solid #4b4445; }
    .vtabs .on { background: #9b8f92; }

    .time { display: flex; flex: none; height: 20px; padding: 0 5px 0 10px; align-items: center; }
    .ticks { flex: 1; height: 100%; display: grid; grid-template-columns: 10fr repeat(24, minmax(0, 20fr)) 13fr; background: linear-gradient(90deg, #b9a8a9 0, #b9a8a9 33%, #a5a3bd 40%, #a9a5b8 60%, #a9b0a4 68%, #a5a4b8 74%, #b9aaac 88%); color: #2c2626; padding-left: 2px; margin-right: 2px; }
    .ticks span { display: block; line-height: 8px; white-space: nowrap; height: 100%; background: linear-gradient(#1a1616, #1a1616) left 9px / 1px 9px no-repeat; }
    .num { background: #494445; height: 12px; padding-left: 2px; width: 42px; flex: none; }
    .play { display: flex; justify-content: space-between; width: 138px; margin-left: 5px; flex: none; }
    .play button { width: 16px; height: 14px; }
    .play svg { width: 11px; height: 11px; }
    .range { display: flex; flex: none; height: 22px; align-items: center; gap: 3px; padding: 0 2px 0 10px; margin-bottom: 1px; }
    .track { flex: 1; height: 13px; background: #9d9091; border: 1px solid #4a4344; border-left-width: 3px; border-right-width: 3px; display: flex; align-items: center; gap: 3px; padding: 0 3px; color: #f8f2f2; }
    .track i { width: 5px; height: 8px; border-right: 1px solid #6d6465; border-bottom: 1px solid #6d6465; }
    .track .e { margin-left: auto; }
    .pick { display: flex; align-items: center; gap: 6px; width: 76px; padding-left: 4px; justify-content: flex-start; }
    .pick svg { width: 5px; height: 4px; }
    .cmd { display: flex; flex: none; height: 15px; align-items: center; padding: 0 2px 0 14px; }
    .cmd label { width: 23px; }
    .cmd input { flex: 428 1 0; height: 14px; background: #454142; margin-right: 4px; }
    .cmd output { flex: 444 1 0; height: 15px; line-height: 15px; background: #000; color: #f4f0f0; padding-left: 2px; }
    .help { display: flex; flex: none; height: 16px; margin: 2px 2px 2px 9px; align-items: center; gap: 13px; padding-left: 7px; font-size: 6px; border: 1px solid #564f50; border-right: 0; }
  `;

  private scene() {
    const v = [28, 34, 46, 65, 90, 119, 149];
    const h = [124, 130, 147, 173, 209, 249, 290];
    const corner = svg`
      <path d="M28 290L32 250L44 205L65 166L90 142L119 127L149 124"/>
      <path d="M34 290L37 252L50 210L69 174L93 149L121 133L149 130"/>
      <path d="M46 290L48 256L65 215L79 188L95 168L121 151L149 147"/>
      <path d="M65 290L66 252L72 218L90 192L119 177L149 173"/>
      <path d="M90 290L90 248L93 213L119 209H149M119 290V127M90 192V142M149 290V124"/>
      <path d="M149 249H65L33 257M119 209L72 215L42 212M93 213L79 188L60 178"/>
      <path d="M28 290H149"/>`;
    return html`<svg class="scene" viewBox="0 0 600 375" preserveAspectRatio="none" aria-hidden="true">
      <path d="M76.500 0V375M266.500 0V375M456.500 0V375M0 213.500H600" stroke="#c5d3df" stroke-opacity=".42" fill="none"/>
      <g transform="translate(104 124) scale(.33333)" fill="none" stroke-width="3.4">
        <rect x="60" y="515" width="630" height="165" rx="90" fill="#1f5a44" opacity=".16"/>
        <g stroke="#52ecac">
          ${["", "translate(748 0) scale(-1 1)", "translate(0 806) scale(1 -1)", "translate(748 806) scale(-1 -1)"].map((t) => svg`<g transform=${t}>${corner}</g>`)}
          ${v.map((x) => svg`<path d="M${x} 290V516M${748 - x} 290V516"/>`)}
          ${h.map((y) => svg`<path d="M149 ${y}H599M149 ${806 - y}H599"/>`)}
        </g>
        <g stroke="#26337e"><path d="M234 -375L333 240L422 225L331 -375"/><circle cx="381" cy="223" r="67"/></g>
        <circle cx="381" cy="233" r="174" stroke="#8b8490"/>
        <path d="M345 63A174 174 0 1 1 415 404" stroke="#e8e22c" stroke-width="4"/>
        <path d="M207 233H555" stroke="#2fc23a" stroke-width="4"/>
        <path d="M381 60V407" stroke="#c43a52" stroke-width="7"/>
        <circle cx="381" cy="233" r="199" stroke="#72bdee" stroke-width="4"/>
      </g>
      <g fill="none" stroke-width="1.600">
        <path d="M14 341L16 344L19 341M16 344V348" stroke="#38e848"/>
        <path d="M17 350V357" stroke="#2b48e0" stroke-width="2"/><path d="M17 358H23" stroke="#8c2030"/>
        <path d="M24 351L29 357M29 351L24 357" stroke="#d82030"/>
      </g>
      <rect x="437.500" y="226.500" width="6" height="5" fill="#2c3440" stroke="#eef2f6" stroke-width="1.400"/>
      <path d="M441 229L448 235L445 235.500L446 237Z" fill="#fff" stroke="#f4f6f8" stroke-width="1"/>
    </svg>`;
  }

  private statusGroup(names: string[], on: string[] = [], size = "") {
    return html`<div class="grp">${names.map((n) => iconButton(n, `sb ${size}${on.includes(n) ? " on" : ""}`))}</div>`;
  }

  render() {
    const masks = ["plus", "joint", "curve", "surf", "deform", "dyn", "rend", "misc"];
    const down = html`<svg viewBox="0 0 6 5" aria-hidden="true"><path d="M0 0H6L3 5Z" fill="#d6cece"/></svg>`;
    return html`<div class="app">
      <header class="title">
        <span class="logo"></span><span>Autodesk Maya 2012 x64: untitled*</span><span>---</span><span>pCube1</span>
        <div class="wbtns"><button aria-label="Minimize">${small("wmin", "i6")}</button><button aria-label="Maximize">${small("wmax", "i6")}</button><button class="x" aria-label="Close">${small("wx", "i6")}</button></div>
      </header>
      <nav class="menu">${MENUS.map((m) => html`<button>${m}</button>`)}</nav>

      <div class="status">
        <div class="mode"><select aria-label="Menu set"><option>Polygons</option></select>${down}</div>
        ${this.statusGroup(["newf", "open", "save"])}
        <span class="sep"></span>
        ${this.statusGroup(["selH", "selO", "selC"], ["selO"])}
        <span class="sep s"></span>
        ${this.statusGroup(["tiny"], [], "slim")}
        ${this.statusGroup(masks, masks, "wide")}
        ${this.statusGroup(["lock", "hilite"], [], "wide")}
        <span class="sep s"></span>
        ${this.statusGroup(["magG", "magC", "magP", "magV", "magL"])}
        <span class="sep s"></span>
        ${this.statusGroup(["inp", "outp", "hist"], ["hist"])}
        <span class="sep s"></span>
        ${this.statusGroup(["rview", "clap", "clap2", "rset"], [], "wide")}
        <span class="sep"></span>
        ${this.statusGroup(["xyz"])}
        ${["X:", "Y:", "Z:"].map((a) => html`<label class="coord">${a}<input type="text"></label>`)}
        <div class="end">${this.statusGroup(["attr", "tool", "chan"], ["attr", "chan"], "wide")}</div>
      </div>

      <div class="tabs">
        ${SHELVES.map((s) => html`<button class="tab ${s === this.shelf ? "on" : ""}" @click=${() => (this.shelf = s)}>${s}</button>`)}
        <button class="bin" aria-label="Delete shelf item">${small("trash", "i10")}</button>
      </div>
      <div class="shelfrow">
        <div class="shelfhandle"><i></i>${down}</div>
        <div class="shelf">${SHELF_ITEMS.map((n) => html`<button aria-label=${n}>${big(n)}</button>`)}</div>
      </div>

      <div class="main">
        <aside class="tools">
          ${["arrow", "lasso", "paint", "move", "rotate", "scale", "univ", "soft", "manip", "none"].map((n) => html`<button class="t ${n === this.tool ? "on" : ""}" aria-label=${n} @click=${() => (this.tool = n)}>${big(n)}</button>`)}
          <div class="lay">${["persp", "four", "outl", "graph", "hyper"].map((n) => html`<button aria-label=${n}>${big(n)}</button>`)}</div>
          <span class="bar"></span>
          <button aria-label="last">${big("last")}</button>
        </aside>

        <section class="view">
          <nav class="vmenu">${["View", "Shading", "Lighting", "Show", "Renderer", "Panels"].map((m) => html`<button>${m}</button>`)}</nav>
          <div class="vbar">
            <span class="sep"></span>
            ${["cam", "cam2", "book", "imgp", "zoomp"].map((n) => html`<button aria-label=${n}>${small(n, "i10")}</button>`)}
            <span class="sep"></span>
            ${["gridi", "film", "resg", "gate", "fldc", "safe", "safe2"].map((n) => html`<button aria-label=${n}>${small(n, "i10")}</button>`)}
            <span class="sep"></span>
            ${["wire", "shade", "shadew", "tex", "lightY", "lightW", "lightO"].map((n) => html`<button aria-label=${n}>${small(n, "i10")}</button>`)}
            <span class="sep"></span>
            ${["iso"].map((n) => html`<button aria-label=${n}>${small(n, "i10")}</button>`)}
            <span class="sep"></span>
            ${["xray", "xrayb", "share"].map((n) => html`<button aria-label=${n}>${small(n, "i10")}</button>`)}
          </div>
          <div class="canvas">
            ${this.scene()}
            <table class="hud"><tbody>${POLYCOUNT.map(([l, a, b, c]) => html`<tr><th>${l}</th><td>${a}</td><td>${b}</td><td>${c}</td></tr>`)}</tbody></table>
          </div>
        </section>

        <section class="side">
          <div class="dock"><span class="dots"></span>Channel Box / Layer Editor<span class="dots r"></span>
            <span class="wb"><button aria-label="Float">${small("pfl", "i6")}</button><button aria-label="Close panel">${small("px", "i6")}</button></span></div>
          <div class="tri">${["axes", "half", "pick"].map((n) => html`<button aria-label=${n}>${small(n)}</button>`)}</div>
          <nav class="smenu">${["Channels", "Edit", "Object", "Show"].map((m) => html`<button>${m}</button>`)}</nav>
          <div class="chan">
            <b>pCube1</b>
            ${CHANNELS.map((g, gi) => html`<div class="cg">${g.map(([l, val], i) => html`<div class="row"><label for="c${gi}${i}">${l}</label><input id="c${gi}${i}" type="text" .value=${val}></div>`)}</div>`)}
            <b>SHAPES</b><b class="in hl">pCubeShape1</b><b>INPUTS</b><b class="in">polyBevel1</b><b class="in">polyCube1</b>
          </div>
          <div class="well w1"></div>
          <div class="grip"></div>
          <div class="ltabs">${["Display", "Render", "Anim"].map((t) => html`<button class="tab ${t === this.layerTab ? "on" : ""}" @click=${() => (this.layerTab = t)}>${t}</button>`)}</div>
          <nav class="smenu">${["Layers", "Options", "Help"].map((m) => html`<button>${m}</button>`)}</nav>
          <div class="licons">${["layU", "layD", "layN", "layS"].map((n) => html`<button aria-label=${n}>${small(n)}</button>`)}</div>
          <div class="well w2"></div>
        </section>
        <div class="vtabs"><button>Attribute Editor</button><button class="on">Channel Box / Layer Editor</button></div>
      </div>

      <div class="time">
        <div class="ticks"><span>0</span>${Array.from({ length: 25 }, (_, i) => html`<span>${100 + i * 200}</span>`)}</div>
        <input class="num" type="text" aria-label="Current time" .value=${"1.00"}>
        <div class="play">${[0, 1, 2, 3, 4, 5, 6, 7].map((n) => html`<button aria-label="Playback ${n}">${small("p" + n)}</button>`)}</div>
      </div>
      <div class="range">
        <input class="num" type="text" aria-label="Start" .value=${"1.00"}>
        <input class="num" type="text" aria-label="Range start" .value=${"1.00"}>
        <div class="track"><i></i><span>1</span><span class="e">5000</span><i></i></div>
        <input class="num" type="text" aria-label="Range end" .value=${"5000.00"}>
        <input class="num" type="text" aria-label="End" .value=${"5000.00"}>
        <button class="pick">${down}No Anim Layer</button>
        <button class="pick">${down}No Character Set</button>
        <button aria-label="Auto key">${small("key")}</button>
        <button aria-label="Preferences">${small("pref")}</button>
      </div>
      <div class="cmd">
        <label for="mel">MEL</label><input id="mel" type="text">
        <output>Undo: rotate -r -os 0 0 -53.415293</output>
        <button aria-label="Script editor">${small("script")}</button>
      </div>
      <footer class="help"><span>Rotation(deg):</span><span>0.000</span><span>0.000</span><span>-53.415</span></footer>
    </div>`;
  }
}
customElements.define("app-root", AppRoot);
